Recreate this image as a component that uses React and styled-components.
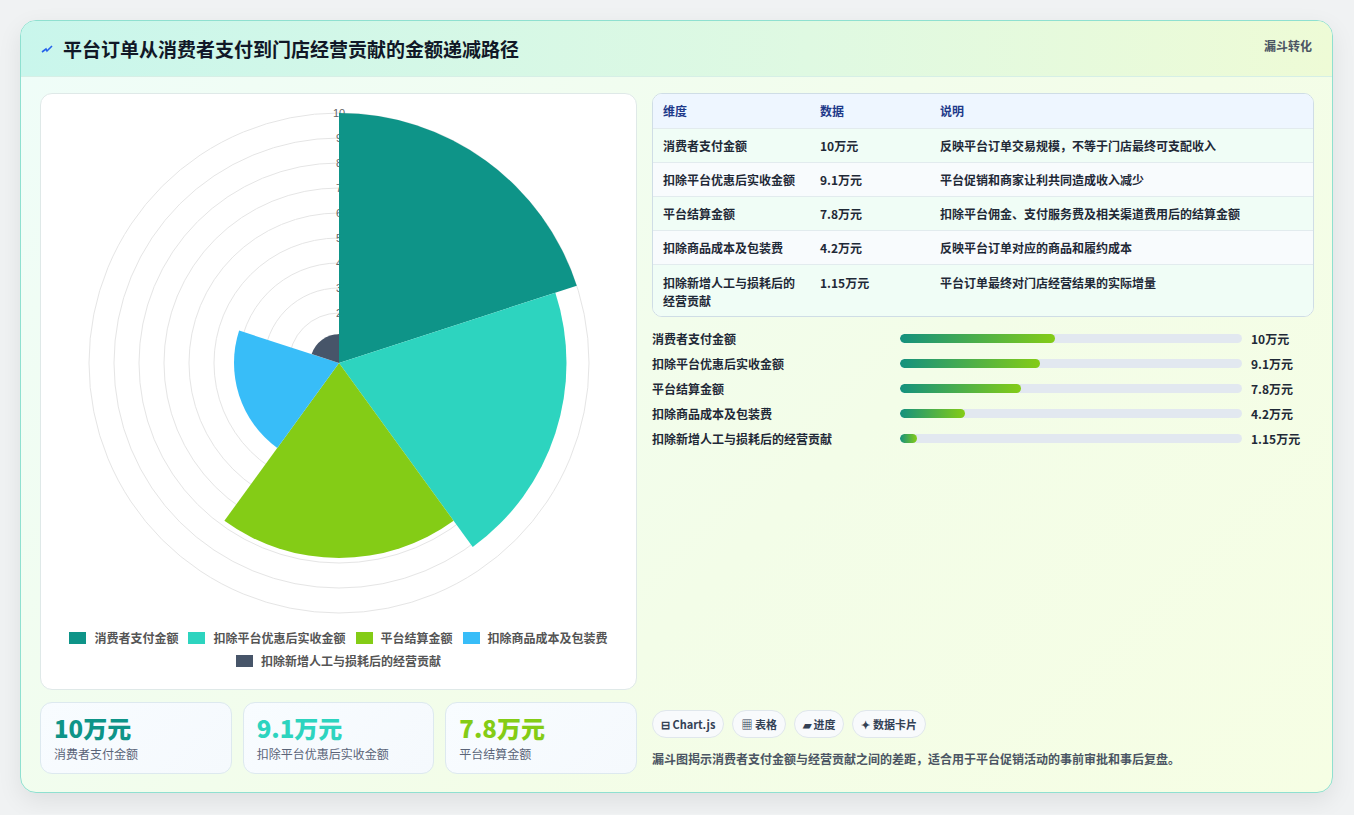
import React from "react";
import styled, { createGlobalStyle } from "styled-components";

const G = createGlobalStyle`
  html,body{margin:0;padding:0;background:#f0f2f3;}
  body{font-family:"Noto Sans CJK SC","Noto Sans",sans-serif;}
`;
const Page = styled.div`padding:20px 20px 21px 20px;width:1354px;box-sizing:border-box;`;
const Card = styled.div`
  width:1313px;height:773px;box-sizing:border-box;border:1px solid #8fe0d0;border-radius:16px;overflow:hidden;
  background:linear-gradient(135deg,#effdf9 0%,#f3fde8 60%,#f6fee4 100%);
  box-shadow:0 8px 24px rgba(0,0,0,0.08);display:flex;flex-direction:column;
`;
const Header = styled.div`
  height:55px;flex:none;display:flex;align-items:center;justify-content:space-between;padding:0 20px;
  background:linear-gradient(90deg,#c9f6ec 0%,#dff9e2 60%,#eefbd6 100%);border-bottom:1px solid #d6efe6;
`;
const Title = styled.h1`margin:0;font-size:19px;font-weight:700;color:#111827;display:flex;align-items:center;gap:10px;`;
const Tag = styled.div`font-size:12px;font-weight:700;color:#4b5563;align-self:flex-start;margin-top:16px;`;
const Body = styled.div`flex:1;display:grid;grid-template-columns:597px 662px;gap:15px;padding:16px 19px 18px 19px;`;
const Left = styled.div`display:flex;flex-direction:column;gap:12px;`;
const ChartCard = styled.div`height:597px;box-sizing:border-box;background:#fff;border:1px solid #dfe9e8;border-radius:12px;display:flex;flex-direction:column;align-items:center;`;
const Legend = styled.div`display:flex;flex-wrap:wrap;justify-content:center;gap:6px 10px;width:560px;margin-top:6px;font-size:12px;color:#555;font-weight:600;`;
const LegItem = styled.span`display:flex;align-items:center;gap:8px;&::before{content:"";width:17px;height:12px;background:${p=>p.c};}`;
const Stats = styled.div`display:grid;grid-template-columns:repeat(3,1fr);gap:11px;`;
const Stat = styled.div`height:72px;box-sizing:border-box;background:linear-gradient(135deg,#f8fcff,#f5f9fd);border:1px solid #dde9ef;border-radius:12px;padding:10px 13px;`;
const StatVal = styled.div`font-size:24px;font-weight:800;color:${p=>p.c};line-height:30px;`;
const StatLab = styled.div`font-size:12px;color:#5a6478;margin-top:2px;`;
const Right = styled.div`display:flex;flex-direction:column;`;
const Table = styled.div`border:1px solid #cfdde6;border-radius:10px;overflow:hidden;background:#fff;`;
const Row = styled.div`display:grid;grid-template-columns:157px 120px 1fr;padding:0 10px;font-size:12px;color:#1f2937;font-weight:600;
  background:${p=>p.h?"#eef6ff":p.alt?"#f8fbfd":"#f0fdf6"};min-height:${p=>p.tall?52:34}px;padding-top:${p=>p.tall?9:0}px;box-sizing:border-box;
  align-items:${p=>p.tall?"start":"center"};border-top:${p=>p.h?"none":"1px solid #e2ebee"};line-height:18px;
  color:${p=>p.h?"#1e3a8a":"#1f2937"};`;
const Bars = styled.div`display:flex;flex-direction:column;gap:7px;margin-top:12px;`;
const BarRow = styled.div`display:grid;grid-template-columns:248px 342px 1fr;gap:0;align-items:center;font-size:12px;font-weight:600;color:#1f2937;height:18px;`;
const Track = styled.div`height:9px;border-radius:5px;background:#e2e8f0;overflow:hidden;`;
const Fill = styled.div`height:100%;border-radius:5px;background:linear-gradient(90deg,#14917e,#84cc16);`;
const BarVal = styled.span`padding-left:9px;`;
const Spacer = styled.div`flex:1;`;
const Chips = styled.div`display:flex;gap:8px;`;
const Chip = styled.span`height:28px;box-sizing:border-box;padding:0 8px;border:1px solid #e0e7ec;border-radius:14px;background:#f8fafc;font-size:11px;font-weight:700;color:#334155;display:flex;align-items:center;gap:3px;`;
const Desc = styled.p`margin:12px 0 7px;font-size:12px;color:#4b5563;font-weight:600;`;

const data=[
  {n:"消费者支付金额",v:10,s:"10万元",c:"#0e9488",d:"反映平台订单交易规模，不等于门店最终可支配收入",w:45.3},
  {n:"扣除平台优惠后实收金额",v:9.1,s:"9.1万元",c:"#2dd4bf",d:"平台促销和商家让利共同造成收入减少",w:41},
  {n:"平台结算金额",v:7.8,s:"7.8万元",c:"#84cc16",d:"扣除平台佣金、支付服务费及相关渠道费用后的结算金额",w:35.4},
  {n:"扣除商品成本及包装费",v:4.2,s:"4.2万元",c:"#38bdf8",d:"反映平台订单对应的商品和履约成本",w:19},
  {n:"扣除新增人工与损耗后的经营贡献",v:1.15,s:"1.15万元",c:"#475569",d:"平台订单最终对门店经营结果的实际增量",w:5},
];

function Polar(){
  const cx=299,cy=270,R=25;
  const segs=data.map((d,i)=>{
    const r=d.v*R,a0=(-90+72*i)*Math.PI/180,a1=(-18+72*i)*Math.PI/180;
    const x0=cx+r*Math.cos(a0),y0=cy+r*Math.sin(a0),x1=cx+r*Math.cos(a1),y1=cy+r*Math.sin(a1);
    return <path key={i} d={`M${cx},${cy}L${x0},${y0}A${r},${r} 0 0 1 ${x1},${y1}Z`} fill={d.c}/>;
  });
  return (
    <svg width="597" height="530" viewBox="0 0 597 530" style={{marginTop:-1}}>
      {[1,2,3,4,5,6,7,8,9,10].map(k=><circle key={k} cx={cx} cy={cy} r={k*R} fill="none" stroke="#e5e5e5"/>)}
      {[1,2,3,4,5,6,7,8,9,10].map(k=><text key={"t"+k} x={cx} y={cy-k*R+4} textAnchor="middle" fontSize="11" fill="#666" fontFamily="Liberation Sans">{k}</text>)}
      {segs}
    </svg>
  );
}

export default function App(){
  return (<><G/><Page><Card>
    <Header>
      <Title><svg width="12" height="12" viewBox="0 0 12 12"><path d="M1 9l4-3 1 2 5-5" stroke="#2563eb" strokeWidth="1.6" fill="none"/></svg>平台订单从消费者支付到门店经营贡献的金额递减路径</Title>
      <Tag>漏斗转化</Tag>
    </Header>
    <Body>
      <Left>
        <ChartCard>
          <Polar/>
          <Legend>{data.map(d=><LegItem key={d.n} c={d.c}>{d.n}</LegItem>)}</Legend>
        </ChartCard>
        <Stats>{data.slice(0,3).map(d=><Stat key={d.n}><StatVal c={d.c}>{d.s}</StatVal><StatLab>{d.n}</StatLab></Stat>)}</Stats>
      </Left>
      <Right>
        <Table>
          <Row h><span>维度</span><span>数据</span><span>说明</span></Row>
          {data.map((d,i)=><Row key={d.n} alt={i%2===1} tall={i===4}><span>{i===4?<>扣除新增人工与损耗后的<br/>经营贡献</>:d.n}</span><span>{d.s}</span><span>{d.d}</span></Row>)}
        </Table>
        <Bars>{data.map(d=><BarRow key={d.n}><span>{d.n}</span><Track><Fill style={{width:d.w+"%"}}/></Track><BarVal>{d.s}</BarVal></BarRow>)}</Bars>
        <Spacer/>
        <Chips><Chip>⊟ Chart.js</Chip><Chip>▦ 表格</Chip><Chip>▰ 进度</Chip><Chip>✦ 数据卡片</Chip></Chips>
        <Desc>漏斗图揭示消费者支付金额与经营贡献之间的差距，适合用于平台促销活动的事前审批和事后复盘。</Desc>
      </Right>
    </Body>
  </Card></Page></>);
}
